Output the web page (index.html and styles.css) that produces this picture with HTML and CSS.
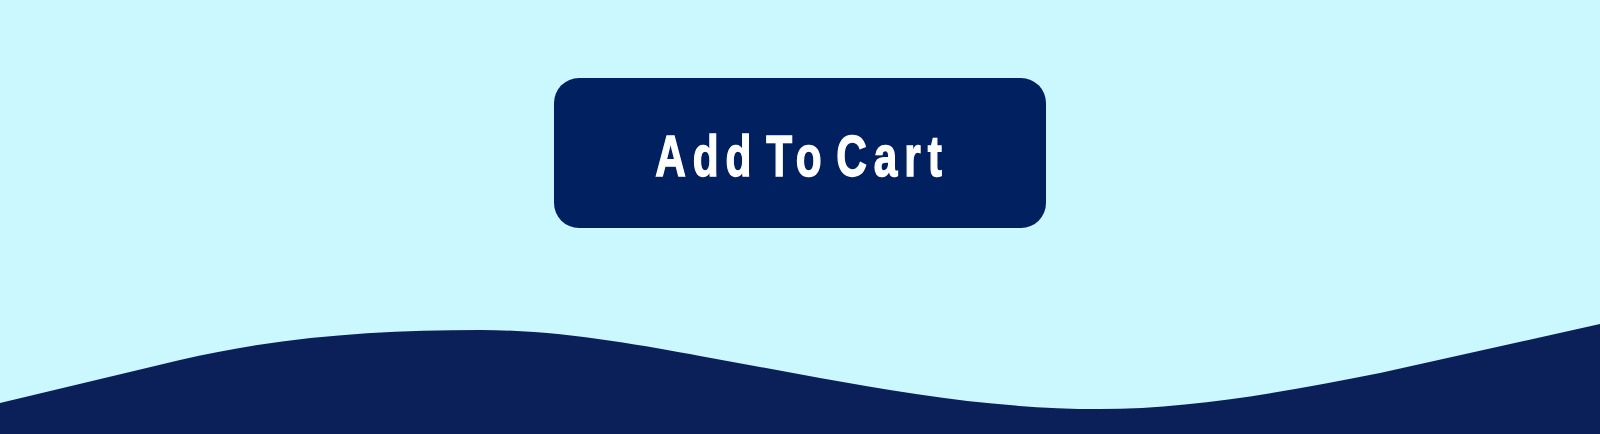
FILE: index.html
```html
<!DOCTYPE html>
<html lang="en">
<head>
    <meta charset="UTF-8">
    <meta name="viewport" content="width=device-width, initial-scale=1.0">
    <title>Add To Cart</title>
    <link rel="stylesheet" href="styles.css">
</head>
<body>
    <main class="hero">
        <button type="button" class="cart-btn"><span class="cart-label">Add To Cart</span></button>
    </main>

    <svg class="wave" viewBox="0 0 1600 111" preserveAspectRatio="none" aria-hidden="true">
        <path d="M0,80 L180,37 C280,13.4 380,7 480,7 C560,7 640,22.2 700,33 L820,55 C910,71.2 1000,86 1100,86 C1190,86 1290,68 1380,50 L1600,1 L1600,111 L0,111 Z"></path>
    </svg>
</body>
</html>
```

FILE: styles.css
```css
* {
    margin: 0;
    padding: 0;
    box-sizing: border-box;
}

body {
    background: #cbf7fe;
    min-height: 100vh;
    display: flex;
    flex-direction: column;
    font-family: 'Liberation Sans', Arial, sans-serif;
}

.hero {
    display: flex;
    justify-content: center;
    padding-top: 78px;
}

.cart-btn {
    width: 492px;
    height: 150px;
    padding-top: 4px;
    display: flex;
    justify-content: center;
    align-items: center;
    background: #002060;
    color: #fff;
    border: none;
    border-radius: 25px;
    font-family: inherit;
    font-size: 58px;
    font-weight: 700;
    cursor: pointer;
}

/* narrow condensed look */
.cart-label {
    display: inline-block;
    white-space: nowrap;
    letter-spacing: 9.5px;
    word-spacing: -15px;
    margin-right: -4px;
    -webkit-text-stroke: 1.5px #fff;
    transform: scaleX(0.73);
}

.wave {
    display: block;
    width: 100%;
    height: 111px;
    margin-top: auto;
}

.wave path {
    fill: #0b1f59;
}
```
